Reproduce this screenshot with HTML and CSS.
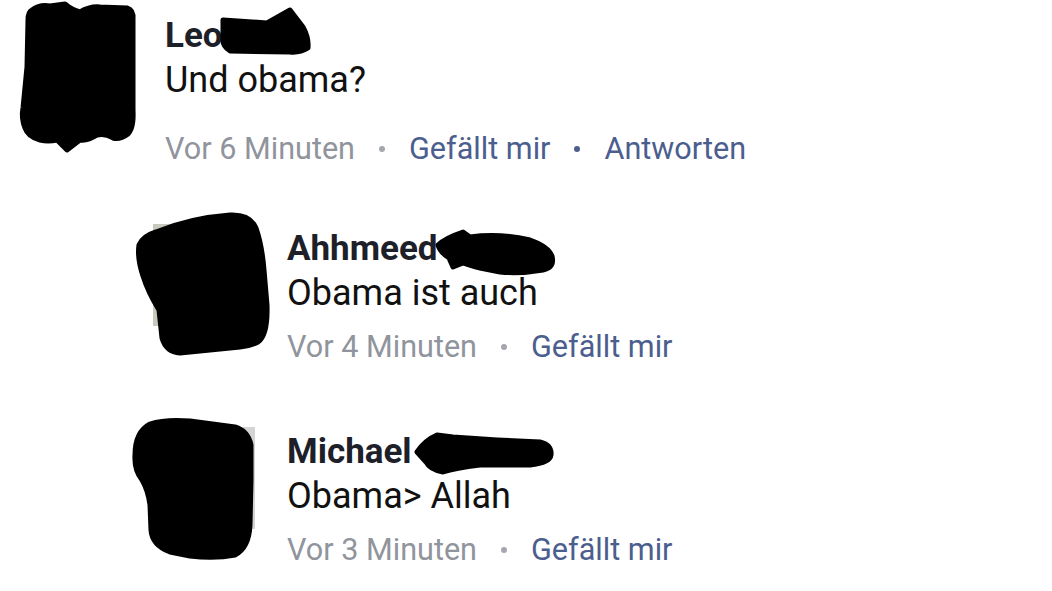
FILE: index.html
```html
<!DOCTYPE html>
<html lang="de">
<head>
  <meta charset="UTF-8" />
  <meta name="viewport" content="width=device-width, initial-scale=1.0"/>
  <title>Kommentare</title>
  <link rel="stylesheet" href="styles.css">
</head>
<body>
  <div class="thread">
    <div class="comment">
      <div class="avatar avatar-lg"></div>
      <div class="comment-body">
        <div class="name">Leo</div>
        <div class="text">Und obama?</div>
        <div class="meta">
          <span class="time">Vor 6 Minuten</span>
          <span class="dot"></span>
          <a href="#" class="action">Gefällt mir</a>
          <span class="dot dot-blue"></span>
          <a href="#" class="action">Antworten</a>
        </div>
      </div>
    </div>

    <div class="replies">
      <div class="comment reply">
        <div class="avatar avatar-green"></div>
        <div class="comment-body">
          <div class="name">Ahhmeed</div>
          <div class="text">Obama ist auch</div>
          <div class="meta">
            <span class="time">Vor 4 Minuten</span>
            <span class="dot"></span>
            <a href="#" class="action">Gefällt mir</a>
          </div>
        </div>
      </div>

      <div class="comment reply">
        <div class="avatar avatar-grey"></div>
        <div class="comment-body">
          <div class="name">Michael</div>
          <div class="text">Obama&gt; Allah</div>
          <div class="meta">
            <span class="time">Vor 3 Minuten</span>
            <span class="dot"></span>
            <a href="#" class="action">Gefällt mir</a>
          </div>
        </div>
      </div>
    </div>
  </div>

  <!-- redaction scribbles drawn over the screenshot -->
  <svg class="redactions" viewBox="0 0 1052 591" width="1052" height="591">
    <g fill="#000" stroke="#000" stroke-width="5" stroke-linejoin="round">
      <path d="M32,10 Q40,4 50,6 L65,4 Q72,10 80,12 Q90,6 100,7 L127,8 Q134,10 133,20 L133,110 Q134,128 128,134 Q120,140 113,138 Q105,133 97,135 Q88,141 80,140 L67,150 L57,140 Q48,142 40,140 Q28,137 25,128 Q21,118 23,108 L27,67 L28,20 Q28,12 32,10 Z"/>
      <path d="M223,20 L267,23 L290,10 L303,27 Q309,38 308,48 Q300,53 290,52 L230,51 Q222,46 223,38 Z"/>
      <path d="M156,232 Q190,218 230,215 Q250,214 256,228 Q262,245 264,270 L267,305 Q268,335 258,342 Q250,346 240,347 L180,353 Q166,352 162,338 L159,310 Q148,292 143,276 Q137,258 139,245 Q143,236 156,232 Z"/>
      <path d="M438,245 Q445,238 463,232 L470,237 Q500,233 530,240 Q548,246 552,256 Q555,268 543,270 Q520,274 500,272 L480,268 Q468,265 463,263 L453,267 L449,258 Q440,252 438,245 Z"/>
      <path d="M150,424 Q165,419 190,421 L235,427 Q248,431 251,445 L251,480 L250,525 Q249,548 235,555 Q215,559 190,556 L170,552 Q152,545 151,530 L150,505 Q148,490 142,480 Q134,470 135,455 Q135,432 150,424 Z"/>
      <path d="M417,452 Q425,440 437,435 L453,437 L497,440 L540,442 Q552,445 551,455 Q550,463 530,465 L480,465 Q455,468 443,472 Q430,470 426,462 Z"/>
    </g>
  </svg>
</body>
</html>
```

FILE: styles.css
```css
* {
  margin: 0;
  padding: 0;
  box-sizing: border-box;
}

body {
  font-family: Roboto, 'Liberation Sans', sans-serif;
  background: #fff;
  width: 1052px;
  height: 591px;
  overflow: hidden;
  position: relative;
}

.thread {
  padding-left: 20px;
}

.comment {
  display: flex;
  gap: 25px;
}

.avatar {
  flex: none;
  width: 102px;
  height: 102px;
}

.avatar-lg {
  width: 120px;
  height: 150px;
}

.avatar-green {
  background: #c7c9bd;
}

.avatar-grey {
  background: #d4d4d4;
}

.comment-body {
  padding-top: 14px;
}

.name {
  font-size: 35px;
  line-height: 44px;
  font-weight: 700;
  color: #1d2029;
}

.text {
  font-size: 36px;
  line-height: 44px;
  color: #111;
}

.meta {
  display: flex;
  align-items: center;
  margin-top: 25px;
  font-size: 30.6px;
  line-height: 44px;
  color: #90949c;
}

.action {
  color: #4b5e8e;
  text-decoration: none;
}

.dot {
  width: 6px;
  height: 6px;
  border-radius: 50%;
  background: #a4a7ad;
  margin: 0 24px;
}

.dot-blue {
  background: #4b5e8e;
}

.replies {
  margin-left: 133px;
  margin-top: 53px;
  display: flex;
  flex-direction: column;
  gap: 58px;
}

.reply {
  gap: 32px;
}

.reply .comment-body {
  padding-top: 3px;
}

.reply .meta {
  margin-top: 10px;
}

.redactions {
  position: absolute;
  left: 0;
  top: 0;
  pointer-events: none;
}
```
